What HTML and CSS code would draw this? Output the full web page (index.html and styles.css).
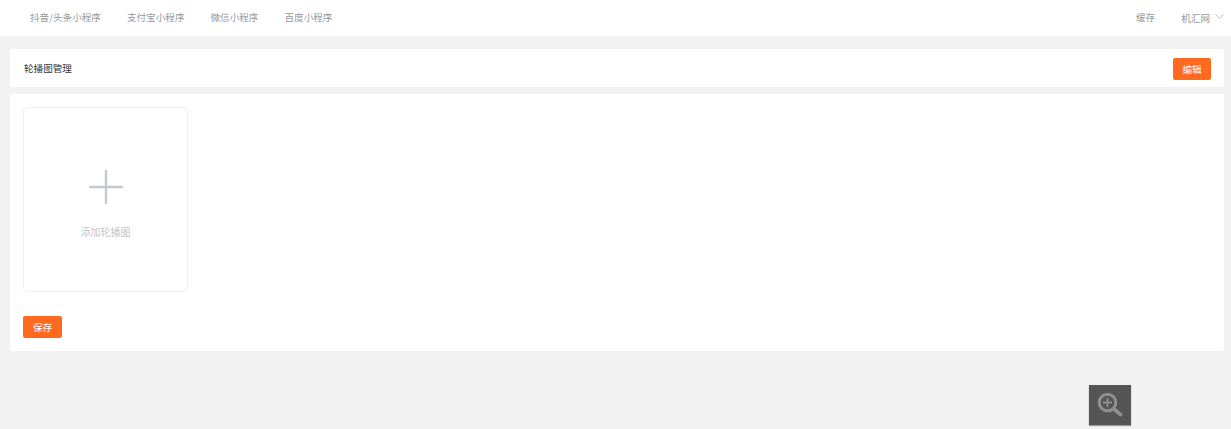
FILE: index.html
```html
<!DOCTYPE html>
<html lang="zh-CN">
<head>
  <meta charset="UTF-8">
  <title>轮播图管理</title>
  <link rel="stylesheet" href="styles.css">
</head>
<body>
  <div class="topbar">
    <ul class="tabs">
      <li>抖音/头条小程序</li>
      <li>支付宝小程序</li>
      <li>微信小程序</li>
      <li>百度小程序</li>
    </ul>
    <div class="topbar-right">
      <span class="cache">缓存</span>
      <span class="site">机汇网
        <svg class="chevron" width="9" height="5" viewBox="0 0 9 5"><path d="M.5.5l4 4 4-4" fill="none" stroke="#c0c0c0"/></svg>
      </span>
    </div>
  </div>

  <div class="panel panel-head">
    <span class="panel-title">轮播图管理</span>
    <button class="btn btn-edit">编辑</button>
  </div>

  <div class="panel panel-main">
    <div class="add-card">
      <svg class="plus" width="34" height="34" viewBox="0 0 34 34"><path d="M17 1v32M1 17h32" stroke="#c5c8d0" stroke-width="2.4" stroke-linecap="round"/></svg>
      <span class="add-text">添加轮播图</span>
    </div>
    <button class="btn">保存</button>
  </div>

  <div class="zoom-tip">
    <svg width="26" height="26" viewBox="0 0 26 26">
      <circle cx="10.5" cy="10.5" r="8.3" fill="none" stroke="#8f8f8f" stroke-width="3"/>
      <path d="M10.5 6v9M6 10.5h9" stroke="#8f8f8f" stroke-width="1.8"/>
      <path d="M17.5 17.5l6 5" stroke="#8f8f8f" stroke-width="3.6" stroke-linecap="round"/>
    </svg>
  </div>
</body>
</html>
```

FILE: styles.css
```css
* {
  margin: 0;
  padding: 0;
  box-sizing: border-box;
}

html, body {
  height: 429px;
  overflow: hidden;
}

body {
  position: relative;
  background: #f2f2f2;
  font-family: "Noto Sans CJK SC", "Liberation Sans", sans-serif;
  font-size: 9.6px;
  color: #333;
}

.topbar {
  display: flex;
  justify-content: space-between;
  align-items: center;
  height: 36px;
  padding: 0 7px 3px 30px;
  background: #fff;
}

.tabs {
  display: flex;
  gap: 26px;
  list-style: none;
  color: #999;
}

.topbar-right {
  display: flex;
  align-items: center;
  gap: 26px;
  color: #999;
}

.site {
  display: flex;
  align-items: center;
  gap: 5px;
  margin-top: 2px;
}

.chevron {
  margin-bottom: 3px;
}

.panel {
  margin: 0 7px 0 10px;
  background: #fff;
  border-radius: 2px;
}

.panel-head {
  display: flex;
  justify-content: space-between;
  align-items: center;
  height: 38px;
  margin-top: 13px;
  padding: 0 13px 0 14px;
}

.panel-title {
  margin-bottom: 1px;
  color: #333;
}

.panel-main {
  height: 257px;
  margin-top: 7px;
  padding: 13px;
}

.btn {
  display: block;
  width: 39px;
  height: 22px;
  border: none;
  border-radius: 2px;
  background: #ff6a1f;
  color: #fff;
  font: inherit;
}

.btn-edit {
  width: 38px;
  margin-top: 2px;
}

.add-card {
  display: flex;
  flex-direction: column;
  align-items: center;
  width: 165px;
  height: 185px;
  margin-bottom: 24px;
  padding-top: 62px;
  border: 1px solid #f0f0f2;
  border-radius: 4px;
}

.add-text {
  margin-top: 20px;
  font-size: 10px;
  color: #c3c5cc;
}

.zoom-tip {
  position: absolute;
  left: 1089px;
  top: 385px;
  display: flex;
  align-items: center;
  justify-content: center;
  width: 42px;
  height: 40px;
  background: #555;
  box-shadow: 0 1px 1px #999;
}
```
